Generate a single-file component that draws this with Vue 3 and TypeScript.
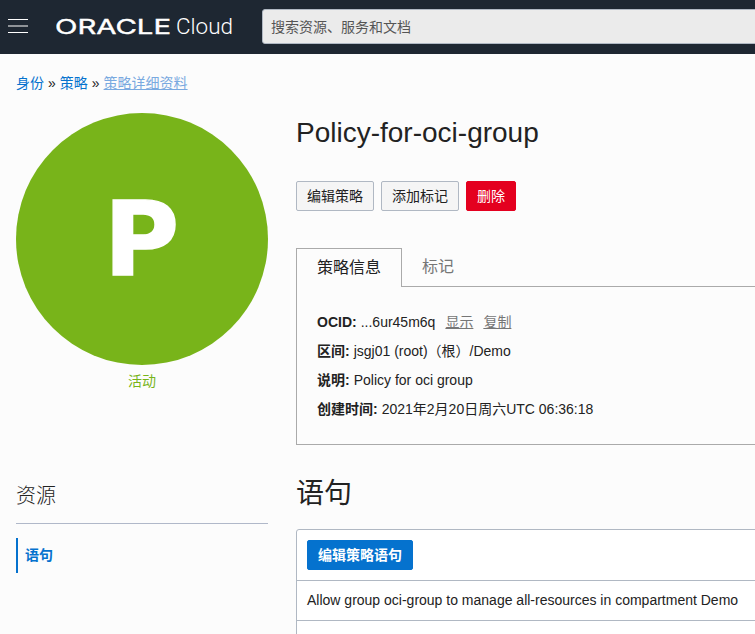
<script setup lang="ts">
interface Detail {
  label: string
  value: string
  actions?: string[]
}

const details: Detail[] = [
  { label: 'OCID:', value: '...6ur45m6q', actions: ['显示', '复制'] },
  { label: '区间:', value: 'jsgj01 (root)（根）/Demo' },
  { label: '说明:', value: 'Policy for oci group' },
  { label: '创建时间:', value: '2021年2月20日周六UTC 06:36:18' },
]

const statements: string[] = [
  'Allow group oci-group to manage all-resources in compartment Demo',
]
</script>

<template>
  <div class="page">
    <header class="topbar">
      <button class="menu" type="button"><span></span><span></span><span></span></button>
      <svg class="brand" width="180" height="26" viewBox="0 0 180 26">
        <text class="brand-oracle" x="-1" y="19.8" textLength="116" lengthAdjust="spacingAndGlyphs">ORACLE</text>
        <text class="brand-cloud" x="120" y="20" textLength="57" lengthAdjust="spacingAndGlyphs">Cloud</text>
      </svg>
      <input class="search" type="text" placeholder="搜索资源、服务和文档" />
    </header>

    <nav class="crumbs">
      <a>身份</a><span>»</span><a>策略</a><span>»</span><a class="current">策略详细资料</a>
    </nav>

    <div class="columns">
      <aside class="side">
        <div class="avatar"><span>P</span></div>
        <div class="state">活动</div>
        <h2 class="side-title">资源</h2>
        <a class="side-link">语句</a>
      </aside>

      <main class="main">
        <h1 class="title">Policy-for-oci-group</h1>
        <div class="actions">
          <button class="btn" type="button">编辑策略</button>
          <button class="btn" type="button">添加标记</button>
          <button class="btn danger" type="button">删除</button>
        </div>

        <div class="tabs">
          <div class="tab active">策略信息</div>
          <div class="tab">标记</div>
        </div>
        <section class="panel">
          <div v-for="d in details" :key="d.label" class="row">
            <b>{{ d.label }}</b><span class="value">{{ d.value }}</span>
            <a v-for="a in d.actions" :key="a" class="action">{{ a }}</a>
          </div>
        </section>

        <h2 class="section-title">语句</h2>
        <section class="table">
          <div class="toolbar"><button class="btn primary" type="button">编辑策略语句</button></div>
          <div v-for="s in statements" :key="s" class="statement">{{ s }}</div>
          <div class="footer"></div>
        </section>
      </main>
    </div>
  </div>
</template>

<style>
body {
  background: #fcfcfc;
  overflow: hidden;
}
</style>

<style scoped>
.page {
  width: 755px;
  height: 634px;
  overflow: hidden;
  background: #fcfcfc;
  color: #222;
  font: 14px/20px "Liberation Sans", "Noto Sans CJK SC", sans-serif;
}
.page * {
  box-sizing: border-box;
}
.topbar {
  display: flex;
  height: 54px;
  background: #1e2732;
}
.menu {
  display: flex;
  flex: none;
  flex-direction: column;
  justify-content: flex-start;
  gap: 5px;
  width: 20px;
  margin: 19px 28px 0 8px;
  padding: 0;
  border: 0;
  background: none;
}
.menu span {
  height: 1px;
  background: #fff;
}
.menu span:nth-child(2) {
  height: 2px;
  background: #8f9398;
}
.brand {
  flex: none;
  margin: 14px 26px 0 0;
  fill: #fff;
}
.brand-oracle {
  font: 400 20.5px Inter, sans-serif;
  stroke: #fff;
  stroke-width: 0.4px;
}
.brand-cloud {
  font: 300 22px Roboto, sans-serif;
}
.search {
  flex: none;
  width: 520px;
  height: 35px;
  margin-top: 9px;
  padding: 0 8px;
  border: 1px solid #b0b8c3;
  border-radius: 3px;
  background: #ebebeb;
  font: inherit;
}
.search::placeholder {
  color: #555;
  opacity: 1;
}
.crumbs {
  display: flex;
  gap: 4px;
  height: 59px;
  padding: 19px 16px 0;
}
.crumbs a {
  color: #0572ce;
}
.crumbs .current {
  color: #79a9e0;
  text-decoration: underline;
}
.columns {
  display: flex;
  gap: 28px;
  padding-left: 16px;
}
.side {
  flex: none;
  width: 252px;
}
.avatar {
  display: flex;
  align-items: center;
  justify-content: center;
  height: 252px;
  padding-right: 1px;
  border-radius: 50%;
  background: #78b41a;
  color: #fff;
  font: bold 103px/122px "DejaVu Sans", sans-serif;
  -webkit-text-stroke: 1.4px #fff;
}
.state {
  margin-top: 6px;
  color: #78b41a;
  text-align: center;
}
.side-title {
  height: 50px;
  margin: 83px 0 14px;
  border-bottom: 1px solid #b0b8c9;
  font-size: 20px;
  font-weight: 300;
  line-height: 44px;
}
.side-link {
  display: block;
  height: 35px;
  padding-left: 7px;
  border-left: 2px solid #0572ce;
  color: #0572ce;
  font-weight: bold;
  line-height: 35px;
}
.main {
  flex: none;
  width: 520px;
}
.title {
  height: 68px;
  margin: 0;
  font-size: 28px;
  font-weight: normal;
  line-height: 40px;
}
.actions {
  display: flex;
  gap: 7px;
}
.btn {
  height: 30px;
  padding: 0 10px;
  border: 1px solid #b0b8c3;
  border-radius: 2px;
  background: #f5f5f5;
  color: #222;
  font: inherit;
  line-height: 28px;
}
.btn.danger {
  border-color: #e4001f;
  background: #e4001f;
  color: #fff;
}
.btn.primary {
  border-color: #0572ce;
  background: #0572ce;
  color: #fff;
  font-weight: bold;
}
.tabs {
  display: flex;
  height: 39px;
  margin-top: 37px;
  font-size: 16px;
  line-height: 37px;
}
.tab {
  flex: 1;
  padding-left: 20px;
  border-bottom: 1px solid #aaa;
  color: #767676;
}
.tab.active {
  flex: none;
  width: 106px;
  border: 1px solid #aaa;
  border-bottom: 0;
  color: #222;
}
.panel {
  height: 158px;
  padding: 21px 20px 0;
  border: 1px solid #aaa;
  border-top: 0;
}
.row {
  display: flex;
  height: 29px;
  line-height: 29px;
}
.value {
  margin-left: 4px;
}
.action {
  margin-left: 10px;
  color: #767676;
  text-decoration: underline;
}
.section-title {
  height: 84px;
  margin: 0;
  font-size: 28px;
  font-weight: normal;
  line-height: 97px;
}
.table {
  border: 1px solid #b0b8c3;
  border-radius: 3px 0 0;
  background: #fff;
}
.toolbar {
  height: 51px;
  padding: 10px;
  border-bottom: 1px solid #b0b8c3;
}
.statement {
  height: 40px;
  padding-left: 10px;
  border-bottom: 1px solid #b0b8c3;
  line-height: 39px;
}
.footer {
  height: 40px;
}
</style>
